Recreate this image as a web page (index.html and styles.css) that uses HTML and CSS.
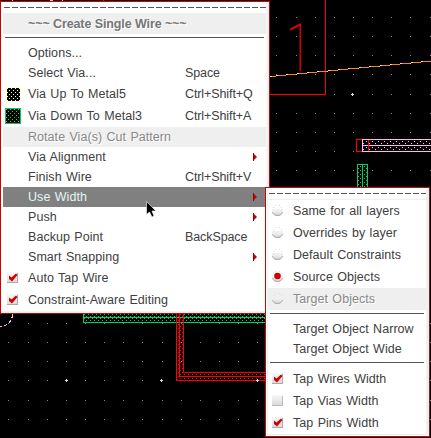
FILE: index.html
```html
<!DOCTYPE html>
<html lang="en">
<head>
<meta charset="utf-8">
<title>Create Single Wire</title>
<link rel="stylesheet" href="styles.css">
</head>
<body>
<svg class="defs" width="0" height="0" aria-hidden="true">
  <symbol id="check" viewBox="0 0 12 12">
    <rect width="11" height="11" fill="url(#boxfill)"/>
    <path d="M0 10.5h11M10.5 1v10" stroke="#aaa" fill="none"/>
    <path d="M2 3.5l2.500 2L9 1.5l1.500 1.5-5.500 6.500L2 7z" fill="#d00000"/>
  </symbol>
  <symbol id="box" viewBox="0 0 12 12">
    <rect width="11" height="11" fill="url(#boxfill)"/>
    <path d="M0 10.5h11M10.5 1v10" stroke="#bbb" fill="none"/>
  </symbol>
  <symbol id="radio" viewBox="0 0 12 12">
    <path d="M3 .5h1M7 .5h1M1 2.5h1M9 2.5h1" stroke="#ddd"/>
    <path d="M0 4h11v2c0 3-2.500 5-5.500 5S0 9 0 6z" fill="url(#ball)"/>
    <path d="M.5 7c1 2.500 2.500 3.500 5 3.500s4-1 5-3.500" stroke="#aaa" fill="none"/>
  </symbol>
  <symbol id="arrow" viewBox="0 0 4 8">
    <path d="M0 0l4 4-4 4z" fill="#c80000"/><path d="M.5 0v8" stroke="#900"/>
  </symbol>
  <linearGradient id="boxfill" x2="0" y2="1"><stop stop-color="#f8f8f8"/><stop offset="1" stop-color="#d8d8d8"/></linearGradient>
  <linearGradient id="ball" x2="0" y2="1"><stop stop-color="#f0f0f0"/><stop offset=".4" stop-color="#eee"/><stop offset="1" stop-color="#ccc"/></linearGradient>
  <pattern id="yellowdots" width="4" height="4" patternUnits="userSpaceOnUse"><path d="M1 1h1v1h-1zM3 3h1v1h-1z" fill="#ffffa0"/></pattern>
  <pattern id="greendots" width="4" height="4" patternUnits="userSpaceOnUse"><path d="M1 1h1v1h-1zM3 3h1v1h-1z" fill="#00e070"/></pattern>
</svg>

<main class="canvas">
  <svg class="layout" width="431" height="438" shape-rendering="crispEdges">
    <defs>
      <pattern id="grid" width="134" height="134" patternUnits="userSpaceOnUse">
        <path d="M8 17.500h1m19 0h1m18 0h1m18 0h1m18 0h1m18 0h1m18 0h1M8 36.500h1m19 0h1m18 0h1m18 0h1m18 0h1m18 0h1m18 0h1M8 55.500h1m19 0h1m18 0h1m18 0h1m18 0h1m18 0h1m18 0h1M8 74.500h1m19 0h1m18 0h1m18 0h1m18 0h1m18 0h1m18 0h1M8 94.500h1m19 0h1m18 0h1m18 0h1m18 0h1m18 0h1m18 0h1M8 113.500h1m19 0h1m18 0h1m18 0h1m18 0h1m18 0h1m18 0h1M8 132.500h1m19 0h1m18 0h1m18 0h1m18 0h1m18 0h1m18 0h1" stroke="#8888a0"/>
      </pattern>
      <pattern id="pinkfill" width="6" height="6" x="363" y="140" patternUnits="userSpaceOnUse"><path d="M3 1h1v1h-1zM0 3h1v1h-1z" fill="#ffc0f0"/></pattern>
      <pattern id="greenfill" width="4" height="4" x="84" y="314" patternUnits="userSpaceOnUse"><path d="M0 0h1v1h-1zM2 2h1v1h-1z" fill="#00d068"/></pattern>
      <pattern id="redfill" width="4" height="4" x="184" y="374" patternUnits="userSpaceOnUse"><path d="M0 0h1v1h-1zM2 2h1v1h-1z" fill="#f00"/></pattern>
    </defs>
    <rect width="431" height="187" fill="url(#grid)"/>
    <g transform="translate(0 38)"><rect y="276" width="431" height="124" fill="url(#grid)"/></g>
    <path d="M12 .5h1m37 0h3m9 0h1" stroke="#ffb8f0"/>
    <path d="M103 .5h1M325.500 0v94.500H270" stroke="#f00" fill="none"/>
    <text class="label" transform="translate(286 71) scale(.7 1)">1</text>
    <path d="M270 76.500h6m0-1h10m0-1h11m0-1h10m0-1h10m0-1h11m0-1h10m0-1h10m0-1h11m0-1h10m0-1h11m0-1h10m0-1h10m0-1h11m0-1h10m0-1h11" stroke="#ff8800" fill="none"/>
    <path d="M270 76.500h6m0-1h10m0-1h11m0-1h10m0-1h10m0-1h11m0-1h10m0-1h10m0-1h11m0-1h10m0-1h11m0-1h10m0-1h10m0-1h11m0-1h10m0-1h11" stroke="#ffd0f0" stroke-dasharray="2 8" fill="none"/>
    <rect x="363" y="140" width="68" height="11" fill="url(#pinkfill)"/>
    <path d="M431 139.500h-68.500v12H431M363 145.500h68" stroke="#ffb8f0" fill="none"/>
    <path d="M362 139.500h-5.500v12h5.500M368.500 140v11" stroke="#f00" fill="none"/>
    <rect x="358" y="165" width="9" height="22" fill="url(#greenfill)"/>
    <path d="M357.500 187v-22.500h10V187M362.500 165v22" stroke="#00d068" fill="none"/>
    <rect x="84" y="314" width="182" height="8" fill="url(#greenfill)"/>
    <path d="M83.500 314v8.500H266M84 317.500h182" stroke="#00d068" fill="none"/>
    <path d="M177 314h6v60h83v6h-89z" fill="url(#redfill)"/>
    <path d="M176.500 314v66.500H266M179.500 314v62.500H266M183.500 314v58.500H266" stroke="#f00" fill="none"/>
    <path d="M12.500 314c0 7-5 12-12.500 13" stroke="#ffb8f0" stroke-dasharray="4 2" fill="none"/>
    <path d="M351 94.500h3M352.500 93v3M65 380.500h3M66.500 379v3M160 380.500h3M161.500 379v3M256 380.500h3M257.500 379v3" stroke="#dde"/>
  </svg>

  <nav class="menu main-menu">
    <div class="tear"></div>
    <div class="title">~~~ Create Single Wire ~~~</div>
    <div class="rule"></div>
    <div class="item"><span class="lead"></span><span class="name">Options...</span></div>
    <div class="item"><span class="lead"></span><span class="name">Select Via...</span><span class="key">Space</span></div>
    <div class="item tall"><span class="lead"><svg width="15" height="15"><rect width="15" height="15" fill="#ffffc8"/><rect x="1" y="1" width="13" height="13"/><rect x="1" y="1" width="13" height="13" fill="url(#yellowdots)"/></svg></span><span class="name">Via Up To Metal5</span><span class="key">Ctrl+Shift+Q</span></div>
    <div class="item tall"><span class="lead green"><svg width="16" height="16"><rect width="16" height="16" fill="#00cc66"/><rect x="1" y="1" width="14" height="14"/><rect x="1" y="1" width="14" height="14" fill="url(#greendots)"/></svg></span><span class="name">Via Down To Metal3</span><span class="key">Ctrl+Shift+A</span></div>
    <div class="item disabled"><span class="lead"></span><span class="name">Rotate Via(s) Cut Pattern</span></div>
    <div class="item"><span class="lead"></span><span class="name">Via Alignment</span><svg class="arrow"><use href="#arrow"/></svg></div>
    <div class="item"><span class="lead"></span><span class="name">Finish Wire</span><span class="key">Ctrl+Shift+V</span></div>
    <div class="item active"><span class="lead"></span><span class="name">Use Width</span><svg class="arrow"><use href="#arrow"/></svg></div>
    <div class="item"><span class="lead"></span><span class="name">Push</span><svg class="arrow"><use href="#arrow"/></svg></div>
    <div class="item"><span class="lead"></span><span class="name">Backup Point</span><span class="key">BackSpace</span></div>
    <div class="item"><span class="lead"></span><span class="name">Smart Snapping</span><svg class="arrow"><use href="#arrow"/></svg></div>
    <div class="item tall"><span class="lead"><svg class="mark"><use href="#check"/></svg></span><span class="name">Auto Tap Wire</span></div>
    <div class="item tall"><span class="lead"><svg class="mark"><use href="#check"/></svg></span><span class="name">Constraint-Aware Editing</span></div>
  </nav>

  <nav class="menu sub-menu">
    <div class="tear"></div>
    <div class="item tall"><span class="lead"><svg class="mark"><use href="#radio"/></svg></span><span class="name">Same for all layers</span></div>
    <div class="item tall"><span class="lead"><svg class="mark"><use href="#radio"/></svg></span><span class="name">Overrides by layer</span></div>
    <div class="item tall"><span class="lead"><svg class="mark"><use href="#radio"/></svg></span><span class="name">Default Constraints</span></div>
    <div class="item tall"><span class="lead"><svg class="mark"><use href="#radio"/><circle cx="5.500" cy="5" r="3.300" fill="#d00000"/></svg></span><span class="name">Source Objects</span></div>
    <div class="item tall disabled"><span class="lead"><svg class="mark"><use href="#radio"/></svg></span><span class="name">Target Objects</span></div>
    <div class="rule"></div>
    <div class="item"><span class="lead"></span><span class="name">Target Object Narrow</span></div>
    <div class="item"><span class="lead"></span><span class="name">Target Object Wide</span></div>
    <div class="rule"></div>
    <div class="item tall"><span class="lead"><svg class="mark"><use href="#check"/></svg></span><span class="name">Tap Wires Width</span></div>
    <div class="item tall"><span class="lead"><svg class="mark"><use href="#box"/></svg></span><span class="name">Tap Vias Width</span></div>
    <div class="item tall"><span class="lead"><svg class="mark"><use href="#check"/></svg></span><span class="name">Tap Pins Width</span></div>
  </nav>

  <svg class="cursor" width="11" height="17" viewBox="0 0 11 17"><path d="M.5.500v13l3-2.500 2.500 5 2-1-2-5H10z" fill="#000" stroke="#fff" stroke-width=".6"/></svg>
</main>
</body>
</html>
```

FILE: styles.css
```css
* { box-sizing: border-box; }
body { margin: 0; background: #000; overflow: hidden; }
.defs { position: absolute; }
.canvas {
  position: relative;
  width: 431px;
  height: 438px;
  overflow: hidden;
  font: 12.5px "Liberation Sans", sans-serif;
  letter-spacing: .05px;
  word-spacing: .8px;
  color: #404040;
}
.layout { display: block; }
.label { font: 100 66px Roboto, sans-serif; fill: #f00; letter-spacing: 0; }
.menu { position: absolute; border: 1px solid #d00000; background: #fff; }
.main-menu { left: 0; top: 1px; width: 270px; height: 313px; padding: 0 3px 2px 2px; box-shadow: inset -3px -2px #f4f4f4; }
.sub-menu { left: 265px; top: 187px; width: 165px; height: 250px; padding: 0 3px 2px 2px; box-shadow: inset 0 0 0 1px #fff, inset -3px -2px #efefef, inset 2px 0 #efefef; }
.tear { height: 11px; background: repeating-linear-gradient(90deg, #555 0 6px, transparent 6px 8px) 1px 5px / 100% 1px no-repeat; }
.sub-menu .tear { margin-bottom: 1px; box-shadow: 0 1px #efefef; }
.title {
  height: 21px;
  padding-left: 25px;
  background: #efefef;
  color: #777;
  font-weight: bold;
  line-height: 22px;
  letter-spacing: -.1px;
  word-spacing: 0;
  text-shadow: 1px 1px #fff;
  white-space: nowrap;
}
.rule { height: 9px; background: linear-gradient(#555, #555) 2px 3px / calc(100% - 4px) 1px no-repeat; }
.item { display: flex; align-items: center; height: 20px; white-space: nowrap; }
.tall { height: 22px; }
.lead { display: flex; align-items: center; width: 25px; padding-left: 3px; flex: none; }
.lead.green { padding-left: 2px; }
.sub-menu .lead { padding-left: 4px; }
.name { flex: 1; }
.key { width: 81px; letter-spacing: -.1px; }
.arrow { width: 4px; height: 8px; margin-right: 9px; }
.mark { width: 12px; height: 12px; margin-left: 1px; }
.sub-menu .mark { margin-left: 0; }
.mark use { width: 12px; height: 12px; }
.disabled { background: #efefef; color: #888; text-shadow: 1px 1px #fff; }
.active { background: #808080; color: #e4f4f4; }
.cursor { position: absolute; left: 146px; top: 201px; }
```
